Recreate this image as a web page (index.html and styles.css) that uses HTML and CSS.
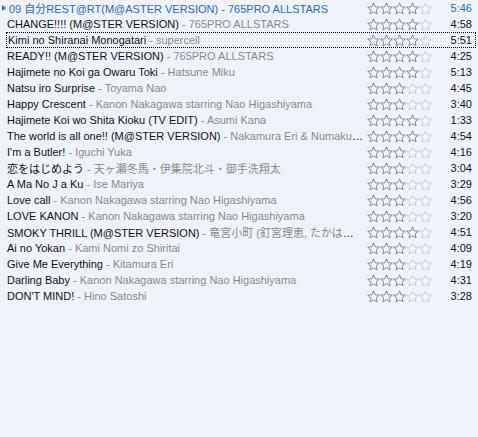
FILE: index.html
```html
<!DOCTYPE html>
<html lang="ja">
<head>
  <meta charset="UTF-8">
  <title>Playlist</title>
  <link rel="stylesheet" href="styles.css">
</head>
<body>
  <svg width="0" height="0" class="defs">
    <defs>
      <path id="star" d="M6.5 0.9 L8.1 4.8 L12.3 5.1 L9.1 7.8 L10.1 11.9 L6.5 9.7 L2.9 11.9 L3.9 7.8 L0.7 5.1 L4.9 4.8 Z"/>
    </defs>
  </svg>

  <div class="playlist" id="list"></div>

  <script>
    const tracks = [
      ['09 自分REST@RT(M@ASTER VERSION)', '765PRO ALLSTARS', 4, '5:46'],
      ['CHANGE!!!! (M@STER VERSION)', '765PRO ALLSTARS', 4, '4:58'],
      ['Kimi no Shiranai Monogatari', 'supercell', 4, '5:51'],
      ['READY!! (M@STER VERSION)', '765PRO ALLSTARS', 4, '4:25'],
      ['Hajimete no Koi ga Owaru Toki', 'Hatsune Miku', 4, '5:13'],
      ['Natsu iro Surprise', 'Toyama Nao', 3, '4:45'],
      ['Happy Crescent', 'Kanon Nakagawa starring Nao Higashiyama', 3, '3:40'],
      ['Hajimete Koi wo Shita Kioku (TV EDIT)', 'Asumi Kana', 4, '1:33'],
      ['The world is all one!! (M@STER VERSION)', 'Nakamura Eri & Numakura Manami', 4, '4:54'],
      ["I'm a Butler!", 'Iguchi Yuka', 3, '4:16'],
      ['恋をはじめよう', '天ヶ瀬冬馬・伊集院北斗・御手洗翔太', 3, '3:04'],
      ['A Ma No J a Ku', 'Ise Mariya', 3, '3:29'],
      ['Love call', 'Kanon Nakagawa starring Nao Higashiyama', 3, '4:56'],
      ['LOVE KANON', 'Kanon Nakagawa starring Nao Higashiyama', 3, '3:20'],
      ['SMOKY THRILL (M@STER VERSION)', '竜宮小町 (釘宮理恵, たかはし智秋, 沼倉愛美)', 4, '4:51'],
      ['Ai no Yokan', 'Kami Nomi zo Shiritai', 3, '4:09'],
      ['Give Me Everything', 'Kitamura Eri', 3, '4:19'],
      ['Darling Baby', 'Kanon Nakagawa starring Nao Higashiyama', 3, '4:31'],
      ["DON'T MIND!", 'Hino Satoshi', 3, '3:28']
    ];

    const list = document.getElementById('list');
    tracks.forEach(([title, artist, rating, time], i) => {
      const row = document.createElement('div');
      row.className = 'row' + (i === 0 ? ' playing' : '') + (i === 2 ? ' focused' : '');
      let stars = '';
      for (let s = 0; s < 5; s++) {
        stars += '<svg class="star ' + (s < rating ? 'on' : 'off') + '" width="13" height="13"><use href="#star"/></svg>';
      }
      row.innerHTML =
        '<div class="info"><span class="title">' + title + '</span> <span class="artist">- ' + artist + '</span></div>' +
        '<div class="rating">' + stars + '</div>' +
        '<div class="time">' + time + '</div>';
      list.appendChild(row);
    });
  </script>
</body>
</html>
```

FILE: styles.css
```css
html, body {
  margin: 0;
  padding: 0;
  height: 100%;
  background: #eef3fa;
}

body {
  font-family: "Liberation Sans", "Noto Sans CJK JP", sans-serif;
  font-size: 11px;
}

.defs {
  position: absolute;
}

.playlist {
  display: flex;
  flex-direction: column;
}

.row {
  display: flex;
  align-items: center;
  height: 16px;
  padding: 0 6px 0 7px;
  border: 1px solid transparent;
  border-left: 0;
  border-right: 0;
  box-sizing: border-box;
  color: #111;
  position: relative;
}

.row.focused {
  border: 1px dotted #000;
  margin-left: 6px;
  margin-right: 2px;
  padding-left: 1px;
  padding-right: 3px;
}

.row.playing {
  color: #2f63c9;
}
.row.playing::before {
  content: '';
  position: absolute;
  left: 2px;
  top: 4px;
  border-left: 4px solid #2f63c9;
  border-top: 3px solid transparent;
  border-bottom: 3px solid transparent;
}
.row.playing .info {
  padding-left: 2px;
}

.info {
  flex: 1;
  min-width: 0;
  white-space: nowrap;
  overflow: hidden;
  text-overflow: ellipsis;
  padding-right: 4px;
}

.artist {
  color: #8a8a8a;
}
.row.playing .artist {
  color: #2f63c9;
}

.rating {
  display: flex;
  width: 65px;
  flex: none;
}

.star {
  display: block;
}
.star.on {
  fill: #f7f9fb;
  stroke: #7d8a98;
  stroke-width: 1;
}
.star.off {
  fill: #f4f7fb;
  stroke: #c5ccd4;
  stroke-width: 1;
}

.time {
  width: 40px;
  flex: none;
  text-align: right;
}
```
